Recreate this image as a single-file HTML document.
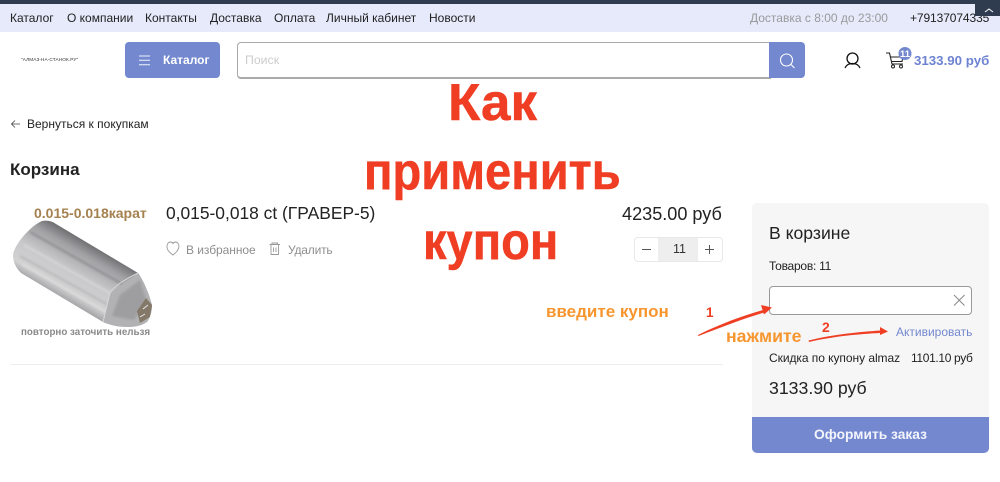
<!DOCTYPE html>
<html lang="ru"><head><meta charset="utf-8"><title>Корзина</title>
<style>
html,body{margin:0;padding:0;background:#fff}
#p{position:relative;width:1000px;height:482px;overflow:hidden;background:#fff;font-family:"Liberation Sans",sans-serif;color:#222}
.t{position:absolute;white-space:nowrap;line-height:1}
.b{position:absolute;box-sizing:border-box}
.r{font-size:52px;font-weight:bold;color:#ef3e23;transform-origin:0 0;-webkit-text-stroke:.5px #ef3e23}
svg{position:absolute;left:0;top:0}
</style></head><body><div id="p">
<div class="b" style="left:0;top:0;width:1000px;height:4px;background:#2f3c50"></div>
<div class="b" style="left:0;top:4px;width:1000px;height:28px;background:#e6eafb"></div>
<div class="t" style="left:10px;top:12px;font-size:12px">Каталог</div>
<div class="t" style="left:67px;top:12px;font-size:12px">О компании</div>
<div class="t" style="left:145px;top:12px;font-size:12px">Контакты</div>
<div class="t" style="left:210px;top:12px;font-size:12px">Доставка</div>
<div class="t" style="left:274px;top:12px;font-size:12px">Оплата</div>
<div class="t" style="left:326px;top:12px;font-size:12px">Личный кабинет</div>
<div class="t" style="left:429px;top:12px;font-size:12px">Новости</div>
<div class="t" style="left:750px;top:12px;font-size:12px;color:#9a9a9a">Доставка с 8:00 до 23:00</div>
<div class="t" style="left:910px;top:12px;font-size:12px;letter-spacing:-.1px">+79137074335</div>
<div class="b" style="left:975px;top:0;width:25px;height:16px;background:#2f3c50"></div>

<div class="t" style="left:21px;top:58px;font-size:4.7px;letter-spacing:.1px;color:#333">"АЛМАЗ-НА-СТАНОК.РУ"</div>
<div class="b" style="left:125px;top:42px;width:95px;height:36px;background:#7388cf;border-radius:4px"></div>
<div class="t" style="left:163px;top:54px;font-size:12px;font-weight:bold;color:#fff">Каталог</div>
<div class="b" style="left:237px;top:42px;width:534px;height:37px;border:1px solid #aaa;border-right:0;border-bottom:2px solid #aaa;border-radius:4px 0 0 4px;background:#fff"></div>
<div class="t" style="left:245px;top:54px;font-size:12.3px;color:#ccc">Поиск</div>
<div class="b" style="left:769px;top:42px;width:36px;height:36px;background:#7388cf;border-radius:0 4px 4px 0"></div>

<div class="t" style="left:27px;top:118px;font-size:12px">Вернуться к покупкам</div>
<div class="t" style="left:10px;top:161px;font-size:17px;font-weight:bold">Корзина</div>

<div class="t" style="left:34px;top:206px;font-size:14px;font-weight:bold;color:#a5814f">0.015-0.018карат</div>
<div class="t" style="left:21px;top:328px;font-size:9.8px;font-weight:bold;color:#8a8a8a">повторно заточить нельзя</div>
<div class="t" style="left:166px;top:205px;font-size:17.4px">0,015-0,018 ct (ГРАВЕР-5)</div>
<div class="t" style="left:186px;top:244px;font-size:12px;letter-spacing:-.05px;color:#8e8e8e">В избранное</div>
<div class="t" style="left:288px;top:244px;font-size:12px;letter-spacing:-.2px;color:#8e8e8e">Удалить</div>
<div class="t" style="left:622px;top:205px;font-size:18.1px">4235.00 руб</div>

<div class="b" style="left:634px;top:237px;width:89px;height:25px;border:1px solid #e8e8e8;border-radius:4px;background:#fff"></div>
<div class="b" style="left:658px;top:238px;width:40px;height:23px;background:#eee"></div>
<div class="t" style="left:673px;top:243px;font-size:12.5px;color:#333">11</div>

<div class="b" style="left:10px;top:364px;width:713px;height:1px;background:#eee"></div>

<div class="t r" style="left:448px;top:77px;transform:scaleX(1.02)">Как</div>
<div class="t r" style="left:364px;top:146px;transform:scaleX(.906)">применить</div>
<div class="t r" style="left:423px;top:216px;transform:scaleX(.905)">купон</div>

<div class="b" style="left:752px;top:203px;width:237px;height:250px;background:#f6f6f6;border-radius:5px"></div>
<div class="t" style="left:769px;top:225px;font-size:17.6px">В корзине</div>
<div class="t" style="left:769px;top:260px;font-size:12px;letter-spacing:-.25px">Товаров: 11</div>
<div class="b" style="left:769px;top:286px;width:203px;height:29px;background:#fff;border:1px solid #999;border-radius:4px"></div>
<div class="t" style="left:896px;top:326px;font-size:12px;color:#7388cf">Активировать</div>
<div class="t" style="left:769px;top:352px;font-size:12px;letter-spacing:-.05px">Скидка по купону almaz</div>
<div class="t" style="left:911px;top:352px;font-size:12px;letter-spacing:-.35px">1101.10 руб</div>
<div class="t" style="left:769px;top:380px;font-size:17.7px">3133.90 руб</div>
<div class="b" style="left:752px;top:417px;width:237px;height:36px;background:#7388cf;border-radius:0 0 5px 5px"></div>
<div class="t" style="left:814px;top:428px;font-size:13.8px;font-weight:bold;color:#f4f5fc">Оформить заказ</div>

<div class="t" style="left:546px;top:303px;font-size:17px;font-weight:bold;color:#f7962f">введите купон</div>
<div class="t" style="left:726px;top:328px;font-size:17.7px;font-weight:bold;color:#f7962f">нажмите</div>
<div class="t" style="left:706px;top:306px;font-size:13.500px;font-weight:bold;color:#ef3e23">1</div>
<div class="t" style="left:822px;top:320px;font-size:14px;font-weight:bold;color:#ef3e23">2</div>

<div class="t" style="left:914px;top:54px;font-size:13.3px;font-weight:bold;color:#6d83d2">3133.90 руб</div>

<svg width="1000" height="482" viewBox="0 0 1000 482" fill="none">
<defs>
<linearGradient id="g" x1="92" y1="243" x2="58" y2="302" gradientUnits="userSpaceOnUse"><stop offset="0" stop-color="#68686b"/><stop offset=".2" stop-color="#a0a0a3"/><stop offset=".5" stop-color="#c8c8ca"/><stop offset=".78" stop-color="#d2d2d3"/><stop offset="1" stop-color="#8a8a8d"/></linearGradient>
<filter id="bl" x="-10%" y="-10%" width="120%" height="120%"><feGaussianBlur stdDeviation="1"/></filter>
<clipPath id="c"><path d="M42 221C47 220 52 221 56 224L138 273C143 280 149 293 152 305C152 312 150 318 147 322C141 326 134 327 128 327C118 327 110 325 103 322L21 273C16 268 13 262 13 255C14 245 30 226 42 221Z"/></clipPath>
</defs>
<!-- top chevron -->
<path d="M985 12l4-3 4 3" stroke="#fff" stroke-width="1"/>
<!-- burger -->
<path d="M139 56h11M139 60.300h11M139 64.700h11" stroke="#f0f2fb" stroke-width="1"/>
<!-- search -->
<circle cx="786.500" cy="60" r="6" stroke="#fff" stroke-width="1.100"/><path d="M791 64.500l3.500 3.500" stroke="#fff" stroke-width="1.100"/>
<!-- user -->
<circle cx="852.500" cy="58.500" r="5.500" stroke="#111" stroke-width="1.300"/><path d="M845 68c1.500-3.500 4-4.500 7.500-4.500s6 1 7.500 4.500" stroke="#111" stroke-width="1.300"/>
<!-- cart -->
<path d="M886 53h3.500l2.500 11h11M890.500 57h12.500l-1 4.500h-10.500" stroke="#222" stroke-width="1.100"/>
<circle cx="893" cy="66.500" r="1.500" stroke="#222"/><circle cx="901" cy="66.500" r="1.500" stroke="#222"/>
<circle cx="905" cy="53.500" r="6.500" fill="#7388cf"/>
<text x="905" y="57" font-size="9.500" font-weight="bold" fill="#fff" text-anchor="middle" font-family="Liberation Sans">11</text>
<!-- back arrow -->
<path d="M20 124h-8.500M15 120.500l-3.500 3.500 3.500 3.500" stroke="#444" stroke-width=".8"/>
<!-- product -->
<g clip-path="url(#c)">
<rect x="10" y="215" width="145" height="115" fill="url(#g)"/>
<g filter="url(#bl)" stroke-width="2" opacity=".5">
<path d="M30 232 122 284" stroke="#707073"/><path d="M24 245 115 296" stroke="#e4e4e4"/><path d="M20 256 112 307" stroke="#a4a4a6"/><path d="M22 264 108 313" stroke="#e8e8e8"/>
</g>
<path d="M138 273 160 290 155 335 100 330 103 322 110 293Z" fill="#b2b2b4"/>
<path d="M120 295 140 280 146 300 134 320 112 316Z" fill="#8f8f92" opacity=".55" filter="url(#bl)"/>
<path d="M146 298l6 7-2 12-10 6-3-12z" fill="#847968"/>
<path d="M143 309l5-4M140 317l5-3" stroke="#e8e8e8" stroke-width="1"/>
<path d="M138 273C124 280 114 286 110 293L103 322" stroke="#d8d8d8" stroke-width="1"/>
</g>
<!-- heart -->
<path d="M173 255c-7-4.500-6-8-6-9 0-2.500 2-4 3.500-4 1.200 0 2 .5 2.500 1.500.5-1 1.300-1.500 2.500-1.500 1.500 0 3.500 1.500 3.500 4 0 1 .1 4.500-6 9z" stroke="#999" stroke-width=".9"/>
<!-- trash -->
<path d="M269.500 244.500h10.500M272 244.500v-1.500h5.500v1.500M271 244.500v10h7.500v-10M273.500 247.500v4.500M276 247.500v4.500" stroke="#999" stroke-width=".9"/>
<!-- qty -->
<path d="M642 249.500h9M705 249.500h9M709.500 245v9" stroke="#555" stroke-width="1"/>
<!-- clear -->
<path d="M954 295l10.500 10.500M964.500 295 954 305.500" stroke="#888" stroke-width="1"/>
<!-- arrows -->
<path d="M698 335 C720 324 745 315 765 309.500 L766 312 C745 318 722 327 698.500 336Z" fill="#ef3e23"/>
<path d="M761 305l11 2.500-8 7z" fill="#ef3e23"/>
<path d="M808.500 340.500C835 334 860 332 880 330.500L880 333C860 334 835 336 809 342Z" fill="#ef3e23"/>
<path d="M880 327l8 4.500-8 3.500z" fill="#ef3e23"/>
</svg>
</div></body></html>
